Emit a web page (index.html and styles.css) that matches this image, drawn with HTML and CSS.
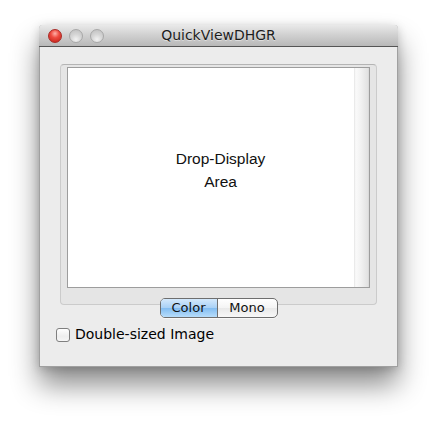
FILE: index.html
```html
<!DOCTYPE html>
<html>
<head>
<meta charset="utf-8">
<link rel="stylesheet" href="styles.css">
</head>
<body>
<div class="window">
  <div class="titlebar">
    <div class="lights">
      <span class="light red"></span>
      <span class="light"></span>
      <span class="light"></span>
    </div>
    <div class="title">QuickViewDHGR</div>
  </div>
  <div class="content">
    <div class="group">
      <div class="well">
        <div class="drop">Drop-Display<br>Area</div>
        <div class="scroller"></div>
      </div>
    </div>
    <div class="segmented">
      <div class="seg seg-on">Color</div>
      <div class="seg">Mono</div>
    </div>
    <div class="check">
      <span class="box"></span>
      <span class="label">Double-sized Image</span>
    </div>
  </div>
</div>
</body>
</html>
```

FILE: styles.css
```css
html, body {
  margin: 0;
  padding: 0;
  background: #ffffff;
}

body {
  width: 438px;
  height: 422px;
  overflow: hidden;
}

.window {
  margin: 25px 0 0 39px;
  width: 359px;
  height: 342px;
  box-sizing: border-box;
  background: #ececec;
  border: 1px solid rgba(0, 0, 0, 0.32);
  border-top: none;
  border-radius: 4px 4px 0 0;
  box-shadow: 0 18px 28px rgba(0, 0, 0, 0.45), 0 2px 10px rgba(0, 0, 0, 0.18);
  font-family: "DejaVu Sans", "Liberation Sans", sans-serif;
  display: flex;
  flex-direction: column;
}

.titlebar {
  height: 21px;
  border-bottom: 1px solid #555555;
  border-radius: 4px 4px 0 0;
  margin: 0 -1px;
  background: linear-gradient(#e9e9e9, #d4d4d4 40%, #b8b8b8);
  display: flex;
  align-items: center;
  position: relative;
}

.lights {
  display: flex;
  gap: 7px;
  padding-left: 9px;
}

.light {
  width: 14px;
  height: 14px;
  box-sizing: border-box;
  border-radius: 50%;
  border: 1px solid #a8a8a8;
  background: radial-gradient(circle at 50% 78%, #f2f2f2 0, #d6d6d6 45%, #bdbdbd 100%);
}

.light.red {
  border-color: #a82a26;
  background: radial-gradient(circle at 50% 30%, #ffb0a8 0, #ee4b40 40%, #c01d14 100%);
}

.title {
  position: absolute;
  left: 0;
  right: 0;
  top: 0;
  bottom: 0;
  text-align: center;
  font-size: 14px;
  line-height: 21px;
  color: #1c1c1c;
  text-shadow: 0 1px 0 rgba(255, 255, 255, 0.45);
  pointer-events: none;
}

.content {
  display: flex;
  flex-direction: column;
  padding: 17px 20px 0 20px;
}

.group {
  height: 241px;
  box-sizing: border-box;
  border: 1px solid #cbcbcb;
  border-top-color: #b4b4b4;
  border-radius: 4px;
  background: #e5e5e5;
  padding: 2px 6px 16px 6px;
}

.well {
  height: 221px;
  box-sizing: border-box;
  border: 1px solid #9d9d9d;
  background: #ffffff;
  display: flex;
}

.drop {
  flex: 1;
  padding: 79px 0 0 19px;
  text-align: center;
  font-family: "Liberation Sans", Arial, sans-serif;
  font-size: 15.5px;
  line-height: 23px;
  color: #111111;
}

.scroller {
  width: 15px;
  background: linear-gradient(to right, #e4e4e4 0, #fafafa 12%, #f2f2f2 45%, #e3e3e3 90%, #d6d6d6 100%);
}

.segmented {
  align-self: center;
  margin-top: -7px;
  display: flex;
  width: 118px;
  height: 20px;
  box-sizing: border-box;
  border: 1px solid #6e6e6e;
  border-radius: 5px;
  overflow: hidden;
  background: linear-gradient(#ffffff, #f4f4f4 50%, #e9e9e9 51%, #f8f8f8);
  box-shadow: 0 1px 0 rgba(255, 255, 255, 0.6);
}

.seg {
  font-size: 13px;
  line-height: 18px;
  color: #111111;
  text-align: center;
  width: 60px;
}

.seg-on {
  width: 57px;
  border-right: 1px solid #6e6e6e;
  background: linear-gradient(#d4e9fc, #a9d1f6 48%, #83bdf1 52%, #b7ddfb);
}

.check {
  display: flex;
  align-items: center;
  gap: 5px;
  margin: 8px 0 0 -4px;
}

.box {
  width: 14px;
  height: 14px;
  box-sizing: border-box;
  border: 1px solid #7f7f7f;
  border-radius: 3px;
  background: linear-gradient(#ffffff, #eeeeee 60%, #f6f6f6);
}

.label {
  font-size: 14px;
  line-height: 17px;
  color: #000000;
}
```
